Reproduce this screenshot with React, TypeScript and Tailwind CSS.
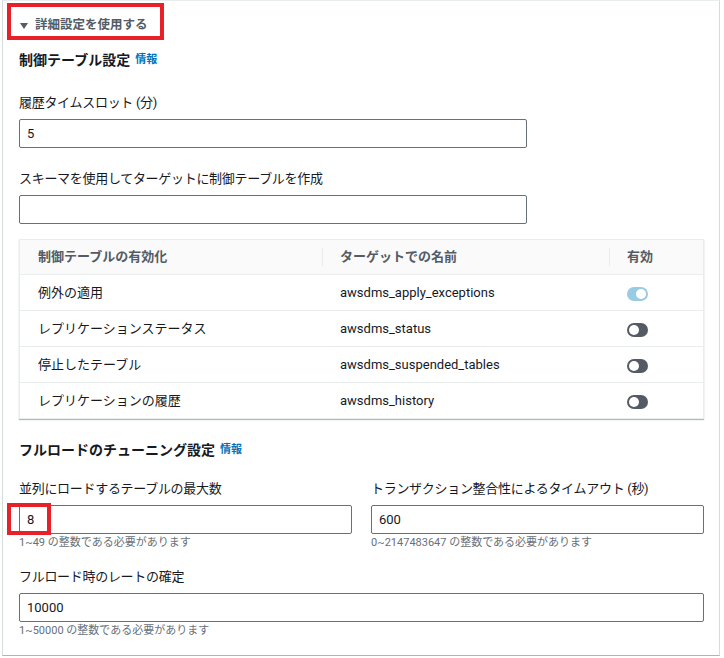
import type { ReactNode } from 'react';

const rows = [
  { label: '例外の適用', name: 'awsdms_apply_exceptions', on: true },
  { label: 'レプリケーションステータス', name: 'awsdms_status', on: false },
  { label: '停止したテーブル', name: 'awsdms_suspended_tables', on: false },
  { label: 'レプリケーションの履歴', name: 'awsdms_history', on: false },
];

const Info = () => (
  <span className="ml-[5px] text-[11px] font-bold text-[#0073bb]">情報</span>
);

const Label = ({ children }: { children: ReactNode }) => (
  <div className="h-[20px] text-[13px] leading-[20px] tracking-[-0.3px] text-[#16191f]">{children}</div>
);

const Input = ({ value, className = '' }: { value: string; className?: string }) => (
  <div
    className={`flex h-[29px] items-center rounded-[2px] border border-[#687078] bg-white px-[7px] text-[13px] text-[#16191f] ${className}`}
  >
    {value}
  </div>
);

const Hint = ({ children }: { children: ReactNode }) => (
  <div className="mt-[2px] text-[11px] leading-[14px] text-[#687078]">{children}</div>
);

const Toggle = ({ on }: { on: boolean }) => (
  <div
    className={`flex h-[14px] w-[21px] items-center rounded-full px-[2px] ${
      on ? 'justify-end bg-[#99cbe4]' : 'justify-start bg-[#545b64]'
    }`}
  >
    <div className="h-[10px] w-[10px] rounded-full bg-white" />
  </div>
);

const App = () => {
  return (
    <div
      className="h-[658px] w-[724px] bg-white"
      style={{ fontFamily: 'Roboto, "Noto Sans CJK JP", sans-serif' }}
    >
      <div className="relative ml-[2px] h-[656px] w-[718px] border-x border-b border-t border-x-[#d5dbdb] border-b-[#aab7b8] border-t-[#eaeded] pl-[16px] pr-[15px]">
        <div className="relative flex h-[46px] items-center gap-[7px] pl-[1px] pt-[2px]">
          <svg width="8" height="6" viewBox="0 0 8 6" className="mt-[2px]">
            <path d="M0 0 L8 0 L4 6 Z" fill="#545b64" />
          </svg>
          <span className="text-[12.5px] font-bold text-[#545b64]">詳細設定を使用する</span>
          <div className="absolute left-[-12px] top-[2px] h-[37px] w-[157px] border-[4px] border-[#e8202a]" />
        </div>

        <div className="flex h-[26px] items-center">
          <span className="text-[14px] font-bold text-[#16191f]">制御テーブル設定</span>
          <Info />
        </div>

        <div className="mt-[20px]">
          <Label>履歴タイムスロット (分)</Label>
          <Input value="5" className="mt-[6px] w-[508px]" />
        </div>

        <div className="mt-[21px]">
          <Label>スキーマを使用してターゲットに制御テーブルを作成</Label>
          <Input value="" className="mt-[6px] w-[508px]" />
        </div>

        <div className="mt-[15px] w-[685px] border border-[#eaeded] shadow-[0_1px_1px_0_rgba(0,28,36,0.3)]">
          <div className="flex h-[34px] items-center bg-[#fafafa] text-[13px] font-bold text-[#545b64]">
            <div className="flex h-full w-[302px] items-center pl-[18px]">制御テーブルの有効化</div>
            <div className="h-[18px] w-px bg-[#eaeded]" />
            <div className="flex h-full w-[286px] items-center pl-[17px]">ターゲットでの名前</div>
            <div className="h-[18px] w-px bg-[#eaeded]" />
            <div className="flex h-full flex-1 items-center pl-[17px]">有効</div>
          </div>
          {rows.map((r) => (
            <div
              key={r.name}
              className="flex h-[36px] items-center border-t border-[#eaeded] text-[13px] text-[#16191f]"
            >
              <div className="w-[303px] pl-[18px]">{r.label}</div>
              <div className="w-[287px] pl-[17px]">{r.name}</div>
              <div className="flex-1 pl-[17px] pt-[3px]">
                <Toggle on={r.on} />
              </div>
            </div>
          ))}
        </div>

        <div className="mt-[21px] flex h-[20px] items-center">
          <span className="text-[14px] font-bold text-[#16191f]">フルロードのチューニング設定</span>
          <Info />
        </div>

        <div className="mt-[19px] flex gap-[19px]">
          <div className="w-[333px]">
            <Label>並列にロードするテーブルの最大数</Label>
            <div className="relative">
              <Input value="8" className="mt-[6px]" />
              <div className="absolute left-[-12px] top-[-2px] h-[32px] w-[44px] border-[4px] border-[#e8202a]" />
            </div>
            <Hint>1~49 の整数である必要があります</Hint>
          </div>
          <div className="w-[333px]">
            <Label>トランザクション整合性によるタイムアウト (秒)</Label>
            <Input value="600" className="mt-[6px]" />
            <Hint>0~2147483647 の整数である必要があります</Hint>
          </div>
        </div>

        <div className="mt-[17px] w-[685px]">
          <Label>フルロード時のレートの確定</Label>
          <Input value="10000" className="mt-[6px]" />
          <Hint>1~50000 の整数である必要があります</Hint>
        </div>
      </div>
    </div>
  );
};

export default App;
